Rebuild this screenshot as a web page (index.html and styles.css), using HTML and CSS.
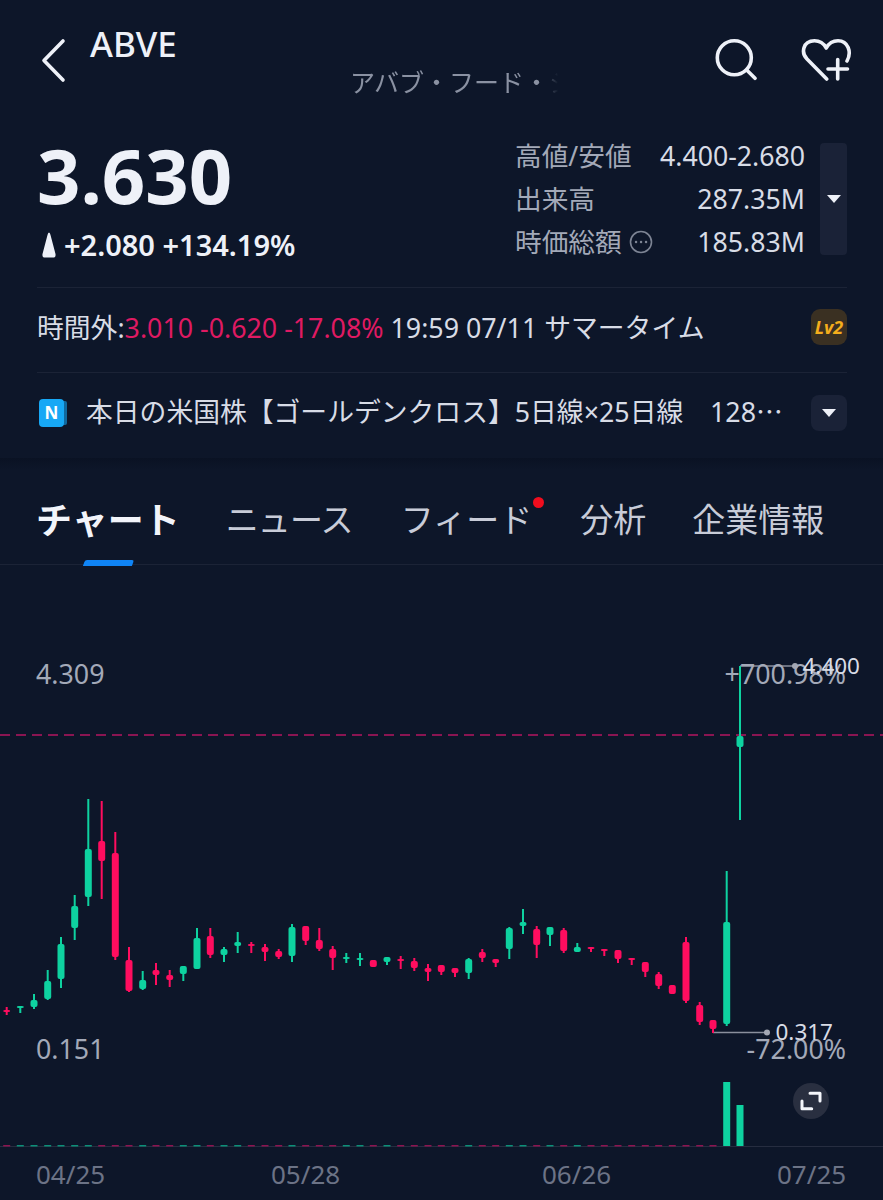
FILE: index.html
```html
<!DOCTYPE html>
<html lang="ja">
<head>
    <meta charset="UTF-8">
    <meta name="viewport" content="width=device-width, initial-scale=1.0">
    <title>ABVE</title>
    <link rel="stylesheet" href="styles.css">
</head>
<body>
    <div class="top">
        <div class="nav">
            <svg class="back" width="30" height="46" viewBox="0 0 30 46"><path d="M24 3 L5 22.5 L24 42"/></svg>
            <div class="names">
                <div class="symbol">ABVE</div>
                <div class="company">アバブ・フード・シ</div>
            </div>
            <svg class="search" width="42" height="44" viewBox="0 0 42 44"><circle cx="19.3" cy="19.7" r="17"/><path d="M31.7 32 L40 40.3"/></svg>
            <svg class="heart" width="52" height="46" viewBox="0 0 52 46">
                <path d="M26.7 41 L7 21 C1 15 2.5 3 14.5 2.8 C20 2.8 24 6 26.3 10 C28.5 6 32.5 2.8 38 2.8 C48 2.8 52 14 47 23"/>
                <path d="M28 31 H47.5 M37.7 21.5 V41"/>
            </svg>
        </div>

        <div class="quote">
            <div class="price-box">
                <div class="price">3.630</div>
                <div class="change">
                    <svg width="16" height="26" viewBox="0 0 16 26"><path d="M8 0.5 Q9 0.5 9.5 3 L14.5 22 Q15 25.5 12 25.5 H4 Q1 25.5 1.5 22 L6.5 3 Q7 0.5 8 0.5Z"/></svg>
                    <span>+2.080 +134.19%</span>
                </div>
            </div>
            <div class="stats">
                <div class="stat"><span class="label">高値/安値</span><span class="value">4.400-2.680</span></div>
                <div class="stat"><span class="label">出来高</span><span class="value">287.35M</span></div>
                <div class="stat">
                    <span class="label">時価総額
                        <svg class="info" width="24" height="24" viewBox="0 0 24 24"><circle cx="12" cy="12" r="10.5"/><path d="M7 12h.1 M12 12h.1 M17 12h.1"/></svg>
                    </span>
                    <span class="value">185.83M</span>
                </div>
            </div>
            <div class="more tall"><i class="caret"></i></div>
        </div>

        <div class="after">
            <div class="after-text">時間外:<span class="down">3.010 -0.620 -17.08%</span> 19:59 07/11 サマータイム</div>
            <div class="lv">Lv2</div>
        </div>

        <div class="news">
            <div class="news-icon"><b>N</b></div>
            <div class="news-text">本日の米国株【ゴールデンクロス】5日線×25日線　128⋯</div>
            <div class="more"><i class="caret"></i></div>
        </div>
    </div>

    <div class="band"></div>

    <div class="tabs">
        <span class="tab active">チャート</span>
        <span class="tab news-tab">ニュース</span>
        <span class="tab feed-tab">フィード<i class="dot"></i></span>
        <span class="tab info-tab">分析</span>
        <span class="tab">企業情報</span>
    </div>

    <div class="chart">
        <svg id="candles" width="883" height="582" viewBox="0 565 883 582"></svg>
        <span class="tag left high">4.309</span>
        <span class="tag right high">+700.98%</span>
        <span class="tag left low">0.151</span>
        <span class="tag right low">-72.00%</span>
        <span class="mark max">4.400</span>
        <span class="mark min">0.317</span>
        <button class="expand">
            <svg width="22" height="22" viewBox="0 0 22 22"><path d="M10 3.3 H20 V11 M2 11 V18.7 H11.7"/></svg>
        </button>
    </div>

    <div class="axis">
        <span>04/25</span>
        <span>05/28</span>
        <span>06/26</span>
        <span>07/25</span>
    </div>

    <script src="chart.js"></script>
</body>
</html>
```

FILE: styles.css
```css
* {
    box-sizing: border-box;
}
body {
    margin: 0;
    width: 883px;
    height: 1200px;
    overflow: hidden;
    background-color: #0d1629;
    color: #d8dce6;
    font-family: "Noto Sans", "Noto Sans CJK JP", sans-serif;
}
.top {
    padding: 0 36px 0 37px;
}
.nav {
    display: flex;
    align-items: flex-start;
    height: 131px;
}
.back {
    margin: 38px 0 0 2px;
    flex: none;
}
.back path, .search circle, .search path, .heart path {
    fill: none;
    stroke: #eef1f8;
    stroke-width: 3.6;
    stroke-linecap: round;
    stroke-linejoin: round;
}
.names {
    flex: 1;
    margin: 20px 0 0 21px;
}
.symbol {
    font-size: 35px;
    font-weight: 500;
    line-height: 48px;
    color: #eef1f8;
}
.company {
    width: 208px;
    margin: -4px 0 0 260px;
    font-size: 25px;
    line-height: 36px;
    color: #8a91a2;
    white-space: nowrap;
    overflow: hidden;
    -webkit-mask-image: linear-gradient(to right, #000 92%, transparent);
    mask-image: linear-gradient(to right, #000 92%, transparent);
}
.search {
    margin: 38px 43px 0 0;
}
.heart {
    margin: 38px -5px 0 0;
}
.quote {
    display: flex;
    height: 157px;
    padding-top: 12px;
    border-bottom: 1px solid #1b2336;
}
.price-box {
    flex: 1;
}
.price {
    margin-top: -4px;
    font-size: 76px;
    font-weight: 700;
    line-height: 72px;
    color: #eef1f8;
}
.change {
    display: flex;
    align-items: center;
    gap: 7px;
    margin: 16px 0 0 4px;
    font-size: 29px;
    font-weight: 600;
    line-height: 36px;
    color: #eef1f8;
}
.change svg {
    fill: #eef1f8;
}
.stats {
    width: 290px;
    margin: -1px 15px 0 0;
}
.stat {
    display: flex;
    justify-content: space-between;
    height: 43px;
    font-size: 26.7px;
    line-height: 28px;
}
.label {
    display: flex;
    align-items: center;
    gap: 7px;
    height: 28px;
    color: #a3a9b8;
}
.info {
    fill: none;
    stroke: #7d8494;
    stroke-width: 1.6;
    stroke-linecap: round;
}
.info path {
    stroke-width: 2.4;
}
.value {
    color: #d8dce6;
}
.more {
    display: flex;
    align-items: center;
    justify-content: center;
    flex: none;
    width: 36px;
    height: 36px;
    border-radius: 8px;
    background-color: #1a2237;
}
.more.tall {
    width: 27px;
    height: 112px;
    border-radius: 4px;
}
.caret {
    width: 0;
    height: 0;
    border-left: 7px solid transparent;
    border-right: 7px solid transparent;
    border-top: 8px solid #eef1f8;
}
.after {
    display: flex;
    align-items: center;
    justify-content: space-between;
    height: 85px;
    padding-bottom: 6px;
    border-bottom: 1px solid #1b2336;
}
.after-text {
    margin-top: -2px;
    font-size: 26.8px;
    white-space: nowrap;
    color: #d8dce6;
}
.down {
    color: #df1a62;
}
.lv {
    width: 36px;
    height: 36px;
    border-radius: 9px;
    background-color: #3a3022;
    color: #f5ae1c;
    font-size: 18px;
    font-weight: 700;
    font-style: italic;
    line-height: 36px;
    text-align: center;
}
.news {
    display: flex;
    align-items: center;
    height: 85px;
    padding-bottom: 6px;
}
.news-icon {
    position: relative;
    flex: none;
    width: 25px;
    height: 28px;
    margin: 0 22px 0 2px;
    border-radius: 4px;
    background-color: #17a8f5;
    color: #fff;
    font-size: 17px;
    line-height: 28px;
    text-align: center;
    box-shadow: 5px 0 0 -2px #10699f;
}
.news-text {
    flex: 1;
    margin-top: -4px;
    font-size: 26.8px;
    white-space: nowrap;
    overflow: hidden;
    color: #d8dce6;
}
.band {
    height: 12px;
    background: linear-gradient(#0a1223, #0d1629);
}
.tabs {
    display: flex;
    align-items: center;
    height: 95px;
    padding: 2px 0 0 36px;
    border-bottom: 1px solid #1b2336;
    font-size: 33px;
    color: #c8ccd8;
}
.tab {
    position: relative;
    white-space: nowrap;
    margin-right: 46px;
}
.tab.active {
    font-weight: 700;
    font-size: 36px;
    color: #f2f4fa;
}
.tab.active::after {
    content: "";
    position: absolute;
    left: 48px;
    bottom: -21px;
    width: 49px;
    height: 6px;
    background-color: #0f84f5;
    transform: skewX(-20deg);
    border-radius: 2px 2px 0 0;
}
.news-tab {
    margin-right: 48px;
    letter-spacing: -0.8px;
}
.feed-tab {
    margin-right: 48px;
}
.dot {
    position: absolute;
    right: -12px;
    top: 3px;
    width: 11px;
    height: 11px;
    border-radius: 50%;
    background-color: #f00d1e;
}
.chart {
    position: relative;
    height: 582px;
    border-bottom: 1px solid #262d40;
}
#candles {
    display: block;
}
.tag, .mark {
    position: absolute;
    font-size: 26.8px;
    line-height: 32px;
    white-space: nowrap;
}
.tag {
    color: #a3a9b8;
}
.tag.left {
    left: 36px;
}
.tag.right {
    right: 37px;
}
.tag.high {
    top: 93px;
}
.tag.low {
    top: 468px;
}
.mark {
    font-size: 22.5px;
    color: #d8dce6;
}
.mark.max {
    right: 23px;
    top: 85px;
}
.mark.min {
    right: 50px;
    top: 451px;
}
.expand {
    position: absolute;
    left: 793px;
    top: 518px;
    display: flex;
    align-items: center;
    justify-content: center;
    width: 36px;
    height: 36px;
    padding: 0;
    border: 0;
    border-radius: 50%;
    background-color: #292f40;
}
.expand path {
    fill: none;
    stroke: #f4f6fb;
    stroke-width: 3;
    stroke-linecap: round;
    stroke-linejoin: round;
}
.axis {
    display: grid;
    grid-template-columns: 235px 271px 235px auto;
    padding: 10px 0 0 36px;
    font-size: 26px;
    line-height: 34px;
    color: #6c7386;
}
```

FILE: chart.js
```js
// x, wick top, wick bottom, body top, body bottom, 1 = up (green)
const candles = [
    [6.7, 1007, 1015, 1010, 1012, 0],
    [20.3, 1006, 1013, 1006, 1008, 1],
    [34, 994, 1009, 1000, 1007, 1],
    [47.7, 970, 1000, 981, 999, 1],
    [61, 937, 988, 944, 979, 1],
    [74.7, 895, 940, 906, 928, 1],
    [88.3, 799, 906, 849, 897, 1],
    [101.7, 801, 899, 841, 861, 0],
    [115.3, 832, 960, 853, 957, 0],
    [129, 947, 992, 960, 991, 0],
    [142.7, 971, 990, 980, 989, 1],
    [156, 963, 985, 970, 975, 0],
    [169.7, 970, 987, 975, 980, 0],
    [183.3, 966, 981, 966, 974, 1],
    [197, 928, 969, 938, 969, 1],
    [210.3, 928, 958, 936, 955, 0],
    [224, 947, 962, 949, 955, 1],
    [237.7, 932, 953, 942, 946, 1],
    [251.3, 942, 953, 944, 945, 0],
    [265, 944, 961, 947, 952, 0],
    [278.7, 949, 959, 951, 957, 0],
    [292, 924, 962, 927, 956, 1],
    [305.7, 926, 945, 926, 941, 0],
    [319.3, 928, 951, 940, 949, 0],
    [332.7, 946, 970, 949, 958, 0],
    [346.3, 953, 963, 957, 959, 1],
    [360, 953, 966, 958, 960, 1],
    [373.3, 960, 967, 960, 967, 0],
    [387, 957, 965, 957, 962, 1],
    [400.7, 956, 969, 959, 961, 0],
    [414.3, 958, 971, 961, 968, 0],
    [428, 964, 981, 968, 972, 0],
    [441.3, 965, 975, 965, 972, 0],
    [455, 968, 977, 968, 973, 0],
    [468.7, 958, 979, 959, 973, 1],
    [482.3, 949, 962, 952, 958, 0],
    [495.7, 959, 967, 959, 963, 0],
    [509.3, 927, 959, 928, 949, 1],
    [523, 909, 934, 922, 926, 1],
    [536.7, 926, 958, 929, 945, 0],
    [550, 927, 946, 927, 935, 1],
    [563.7, 928, 953, 930, 951, 0],
    [577.3, 943, 952, 947, 952, 1],
    [591, 947, 952, 947, 949, 0],
    [604.3, 949, 956, 949, 951, 0],
    [618, 950, 963, 950, 959, 0],
    [631.7, 958, 965, 958, 960, 0],
    [645.3, 962, 977, 962, 972, 0],
    [658.7, 972, 989, 974, 986, 0],
    [672.3, 985, 994, 985, 994, 0],
    [686, 937, 1003, 942, 1001, 0],
    [699.7, 1002, 1025, 1005, 1022, 0],
    [713, 1020, 1033, 1020, 1029, 0],
    [726.7, 871, 1026, 922, 1024, 1],
    [740, 666, 820, 736, 747, 1]
];

const svg = document.getElementById('candles');
const UP = '#0ed2a0';
const DOWN = '#ff0d5f';
const LOW_VOLUME_UP = '#0c8f78';
const LOW_VOLUME_DOWN = '#8c1450';

function add(tag, attrs) {
    const el = document.createElementNS('http://www.w3.org/2000/svg', tag);
    for (const key in attrs) {
        el.setAttribute(key, attrs[key]);
    }
    svg.appendChild(el);
}

// previous close line and the high / low leaders
add('line', { x1: 0, y1: 735, x2: 883, y2: 735, stroke: '#8a1552', 'stroke-width': 2, 'stroke-dasharray': '10 6' });
add('line', { x1: 740, y1: 666, x2: 795, y2: 666, stroke: '#8a8f9d', 'stroke-width': 1.5 });
add('circle', { cx: 795, cy: 666, r: 3, fill: '#a3a7b3' });
add('line', { x1: 713, y1: 1032.5, x2: 767, y2: 1032.5, stroke: '#8a8f9d', 'stroke-width': 1.5 });
add('circle', { cx: 767, cy: 1032.5, r: 3, fill: '#a3a7b3' });

candles.forEach(function (c) {
    const color = c[5] ? UP : DOWN;
    add('rect', { x: c[0] - 1, y: c[1], width: 2, height: c[2] - c[1], fill: color });
    add('rect', { x: c[0] - 3.5, y: c[3], width: 7, height: Math.max(c[4] - c[3], 2), rx: 2, fill: color });

    // volume bars, only the last two are tall
    if (c[0] < 720) {
        add('rect', { x: c[0] - 3.5, y: 1145, width: 7, height: 1.5, fill: c[5] ? LOW_VOLUME_UP : LOW_VOLUME_DOWN });
    }
});

add('rect', { x: 723.2, y: 1082, width: 7, height: 64, fill: UP });
add('rect', { x: 736.5, y: 1105, width: 7, height: 41, fill: UP });
```
